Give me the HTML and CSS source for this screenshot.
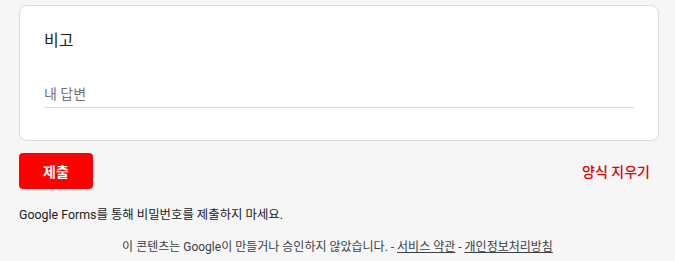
FILE: index.html
```html
<!DOCTYPE html>
<html lang="ko">
<head>
	<meta charset="UTF-8">
	<meta name="viewport" content="width=device-width, initial-scale=1.0">
	<title>Google Forms</title>
	<link rel="stylesheet" href="styles.css">
</head>
<body>
	<div class="form-wrap">
		<div class="question-card">
			<div class="question-title">비고</div>
			<div class="answer-field">
				<input type="text" class="answer-input" placeholder="내 답변">
			</div>
		</div>

		<div class="nav-row">
			<button class="submit-btn">제출</button>
			<span class="clear-form">양식 지우기</span>
		</div>

		<div class="password-note">Google Forms를 통해 비밀번호를 제출하지 마세요.</div>
	</div>

	<div class="footer">
		이 콘텐츠는 Google이 만들거나 승인하지 않았습니다. - <a href="#">서비스 약관</a> - <a href="#">개인정보처리방침</a>
	</div>
</body>
</html>
```

FILE: styles.css
```css
html, body {
	margin: 0;
	padding: 0;
	background-color: #f6f6f6;
	font-family: Roboto, "Noto Sans CJK KR", sans-serif;
	color: #202124;
}

.form-wrap {
	width: 640px;
	margin-left: 19px;
	padding-top: 5px;
}

.question-card {
	background-color: #fff;
	border: 1px solid #dadce0;
	border-radius: 8px;
	padding: 23px 24px 32px 24px;
}

.question-title {
	font-size: 16px;
	line-height: 24px;
	height: 24px;
}

.answer-field {
	margin-top: 27px;
	width: 590px;
	border-bottom: 1px solid #dadce0;
}

.answer-input {
	display: block;
	width: 100%;
	height: 27px;
	border: none;
	outline: none;
	padding: 0;
	margin: 0;
	font-family: inherit;
	font-size: 14px;
	color: #202124;
	background: transparent;
}

.answer-input::placeholder {
	color: #70757a;
}

.nav-row {
	display: flex;
	justify-content: space-between;
	align-items: center;
	margin-top: 12px;
}

.submit-btn {
	width: 74px;
	height: 36px;
	border: none;
	border-radius: 4px;
	background-color: #ff0000;
	color: #fff;
	font-family: inherit;
	font-size: 14px;
	font-weight: 700;
	padding: 0;
}

.clear-form {
	color: #e00000;
	font-size: 14px;
	font-weight: 500;
	margin-right: 9px;
}

.password-note {
	margin-top: 18px;
	font-size: 12.4px;
	line-height: 16px;
	color: #202124;
}

.footer {
	margin-top: 16px;
	text-align: center;
	font-size: 12px;
	line-height: 16px;
	color: #3c4043;
}

.footer a {
	color: #3c4043;
}
```
